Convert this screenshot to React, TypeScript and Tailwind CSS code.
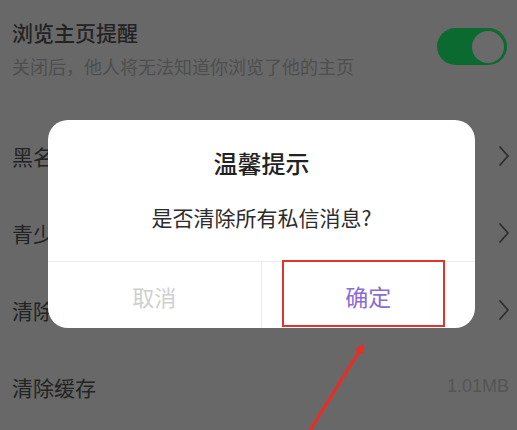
import { ReactNode } from "react";

const font = { fontFamily: '"Noto Sans CJK SC", "Noto Sans", sans-serif' };

function Chevron() {
  return (
    <svg width="12" height="22" viewBox="0 0 12 22" fill="none">
      <path d="M2 2l8 9-8 9" stroke="#2e2e2e" strokeWidth="1.8" strokeLinecap="round" strokeLinejoin="round" />
    </svg>
  );
}

function Row({ label, right }: { label: string; right: ReactNode }) {
  return (
    <div className="h-[77px] flex items-center justify-between pl-3 pr-[7px]">
      <span className="text-[21px] leading-[26px] text-[#232323]">{label}</span>
      {right}
    </div>
  );
}

export default function App() {
  return (
    <div className="relative w-[517px] h-[430px] overflow-hidden bg-[#686868]" style={font}>
      {/* Setting with toggle */}
      <div className="h-[117px] flex items-start justify-between pl-3 pr-[10px]">
        <div className="pt-[19px] flex flex-col gap-[9px]">
          <span className="text-[21px] leading-[27px] font-medium text-[#232323]">浏览主页提醒</span>
          <span className="text-[18px] leading-[23px] text-[#4e4e4e]">关闭后，他人将无法知道你浏览了他的主页</span>
        </div>
        <div className="mt-[28px] w-[70px] h-[37px] rounded-full bg-[#0b6a30] flex items-center justify-end pr-[3px]">
          <div className="w-[32px] h-[32px] rounded-full bg-[#6a6a6a]" />
        </div>
      </div>

      <Row label="黑名单" right={<Chevron />} />
      <Row label="青少年模式" right={<Chevron />} />
      <Row label="清除私信消息" right={<Chevron />} />
      <Row
        label="清除缓存"
        right={<span className="text-[18px] text-[#555] pr-[1px]" style={{ fontFamily: '"Liberation Sans", sans-serif' }}>1.01MB</span>}
      />

      {/* Dialog */}
      <div className="absolute left-[48px] top-[120px] w-[427px] h-[208px] rounded-[20px] bg-white flex flex-col">
        <div className="h-[141px] flex flex-col items-center pt-[28px] gap-[25px]">
          <span className="text-[24px] leading-[30px] font-medium text-[#222]">温馨提示</span>
          <span className="text-[21px] leading-[28px] text-[#2c2c2c]">是否清除所有私信消息?</span>
        </div>
        <div className="flex-1 grid grid-cols-2 border-t border-[#ececec]">
          <div className="flex items-center justify-center border-r border-[#ececec] pt-[3px]">
            <span className="text-[22px] text-[#cfcfcf]">取消</span>
          </div>
          <div className="flex items-center justify-center pt-[3px]">
            <span className="text-[23px] text-[#8a6cd6]">确定</span>
          </div>
        </div>
        {/* annotation box */}
        <div className="absolute left-[234px] top-[140px] w-[163px] h-[67px] border-2 border-[#e2342f]" />
      </div>

      {/* annotation arrow */}
      <svg className="absolute inset-0" width="517" height="430" viewBox="0 0 517 430">
        <line x1="309" y1="432" x2="360" y2="350" stroke="#ee2a22" strokeWidth="3" />
        <polygon points="364,343 355,350 363,354" fill="#ee2a22" />
      </svg>
    </div>
  );
}
